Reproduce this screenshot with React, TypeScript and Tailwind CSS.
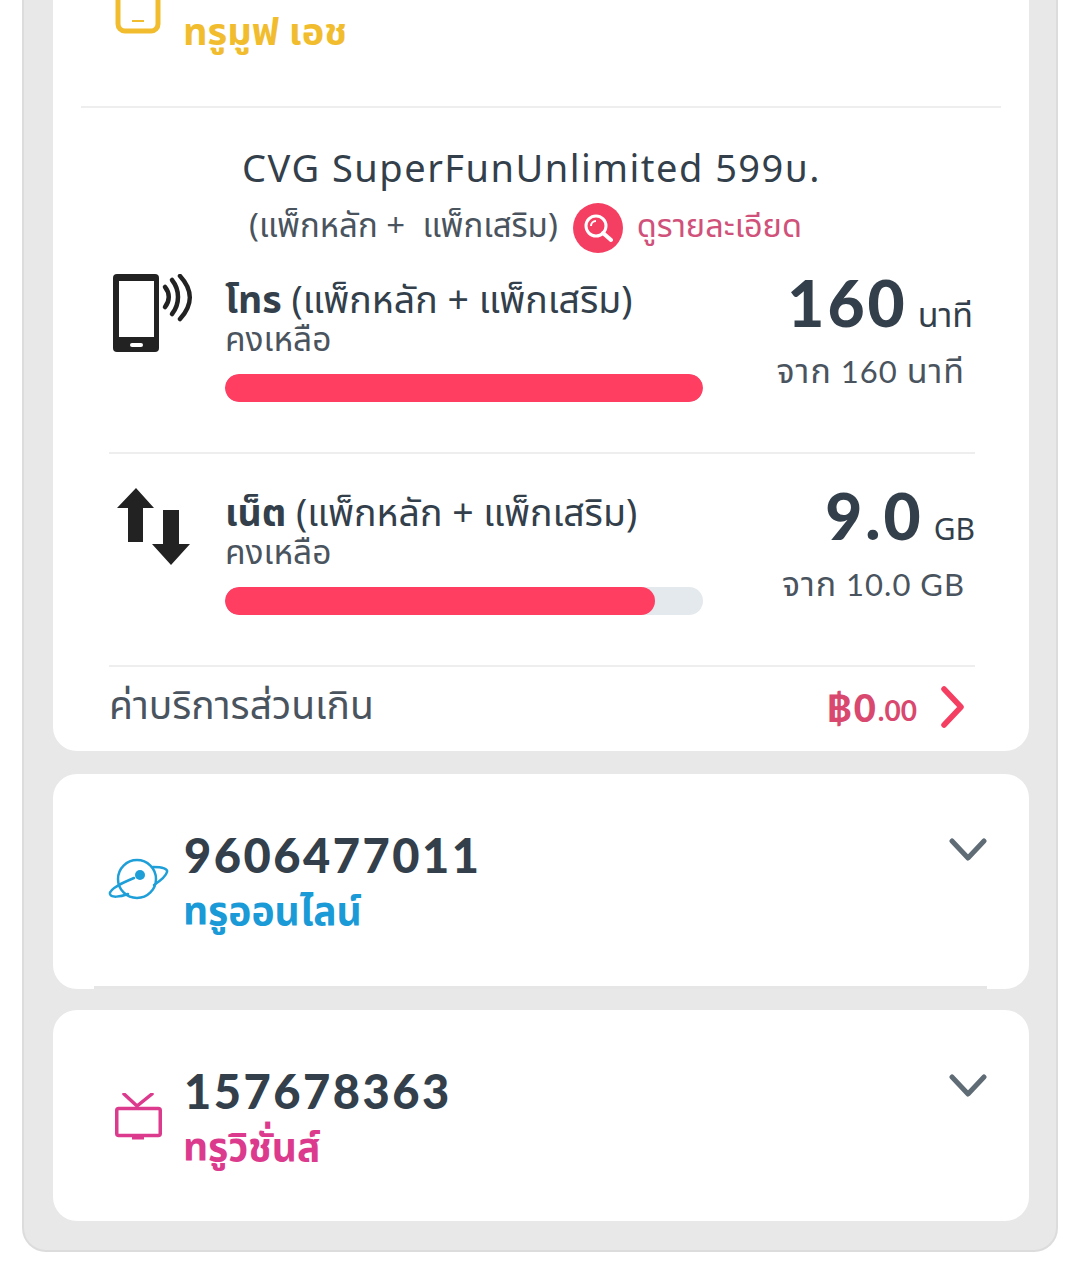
const font = "font-['Noto_Sans_Thai','Noto_Sans','Open_Sans',sans-serif]";
const digits = "font-['Lato','Noto_Sans_Thai','Noto_Sans',sans-serif]";

function PhoneWaves() {
  return (
    <svg className="ml-[1px]" width="80" height="80" viewBox="0 0 80 80" fill="none">
      <rect x="0" y="0" width="46" height="78" rx="4" fill="#222" />
      <rect x="6" y="7" width="35" height="56" fill="#fff" />
      <rect x="17" y="69" width="13" height="4" rx="2" fill="#fff" />
      <g stroke="#222" strokeWidth="4.5" strokeLinecap="round">
        <path d="M52 13c5 6 5 14 0 20" />
        <path d="M59 6c8 10 8 24 0 34" />
        <path d="M67 2c13 14 13 29 0 43" />
      </g>
    </svg>
  );
}

function Arrows() {
  return (
    <svg className="ml-[5px] mt-[1px]" width="74" height="78" viewBox="0 0 74 78" fill="#222">
      <path d="M19 0 37 20H26V54H11V20H0Z" />
      <path d="M46 22H62V56H73L54 77 35 56H46Z" />
    </svg>
  );
}

function Th({ children }: { children: React.ReactNode }) {
  return <span className="text-[34px]">{children}</span>;
}

function UsageRow({ icon, label, value, unit, total, pct }: { icon: React.ReactNode; label: string; value: string; unit: React.ReactNode; total: React.ReactNode; pct: number }) {
  return (
    <div className="flex h-[180px] border-b-2 border-[#eeeeee]">
      <div className="w-[116px] pl-[3px]">{icon}</div>
      <div className="w-[478px]">
        <div className="h-[48px] whitespace-nowrap text-[37.5px] leading-[56px] text-[#333f4b]">
          <span className="font-bold">{label}</span> (แพ็กหลัก + แพ็กเสริม)
        </div>
        <div className="h-[36px] text-[33.5px] leading-[38px] text-[#4a545e]">คงเหลือ</div>
        <div className="mt-[16px] h-[28px] overflow-hidden rounded-full bg-[#e4e9ee]">
          <div className="h-full rounded-full bg-[#ff3e62]" style={{ width: `${pct}%` }} />
        </div>
      </div>
      <div className="flex-1 whitespace-nowrap text-right">
        <div className="h-[60px] text-[#333f4b]">
          <span className={`${digits} text-[64px] font-black leading-[58px] tracking-[3px]`}>{value}</span>
          <span className="ml-[10px] leading-[58px]">{unit}</span>
        </div>
        <div className={`${digits} mt-[16px] pr-[10px] text-[31px] leading-[40px] tracking-[1px] text-[#4a545e]`}>{total}</div>
      </div>
    </div>
  );
}

function AccountCard({ icon, number, name, color, frame, divider }: { icon: React.ReactNode; number: string; name: string; color: string; frame: string; divider?: boolean }) {
  return (
    <div className={`relative flex rounded-[24px] bg-white ${frame}`}>
      <div className="w-[130px]">{icon}</div>
      <div className="pt-[50px]">
        <div className={`${digits} pl-[1px] text-[47px] font-black leading-[62px] tracking-[2.5px] text-[#333f4b]`}>{number}</div>
        <div className={`text-[39px] font-bold leading-[56px] ${color}`}>{name}</div>
      </div>
      <svg className="absolute right-[42px] top-[63px]" width="38" height="26" viewBox="0 0 38 26" fill="none">
        <path d="M3 4 19 21 35 4" stroke="#5f6b75" strokeWidth="5" strokeLinecap="round" strokeLinejoin="round" />
      </svg>
      {divider && <div className="absolute bottom-0 left-[41px] right-[42px] h-[3px] bg-[#e6e6e6]" />}
    </div>
  );
}

export default function App() {
  return (
    <div className={`h-[1264px] w-[1080px] overflow-hidden bg-white ${font}`}>
      <div className="mx-[22px] h-[1252px] rounded-b-[24px] border-x-2 border-b-2 border-[#dcdcdc] bg-[#e8e8e8] pl-[29px] pr-[27px]">
        <div className="h-[751px] rounded-b-[24px] bg-white px-[28px]">
          <div className="flex h-[108px] border-b-2 border-[#eeeeee]">
            <svg className="ml-[34px]" width="46" height="34" viewBox="0 0 46 34" fill="none">
              <path d="M3 0V24a7 7 0 0 0 7 7H36a7 7 0 0 0 7-7V0" stroke="#f1bd2e" strokeWidth="5" />
              <path d="M17 21H29" stroke="#f1bd2e" strokeWidth="2" />
            </svg>
            <div className="ml-[22px] text-[38px] font-bold leading-[68px] text-[#f1bd2e]">ทรูมูฟ เอช</div>
          </div>
          <div className="pl-[28px] pr-[26px]">
            <div className="mt-[37px] pr-[21px] text-center text-[38px] leading-[52px] tracking-[1.5px] text-[#333f4b]">CVG SuperFunUnlimited 599บ.</div>
            <div className="flex h-[58px] items-center pl-[140px] pt-[4px]">
              <span className="whitespace-pre text-[33px] text-[#4a545e]">(แพ็กหลัก +  แพ็กเสริม)</span>
              <span className="ml-[15px] flex h-[50px] w-[50px] items-center justify-center rounded-full bg-[#f43f62]">
                <svg width="30" height="30" viewBox="0 0 30 30" fill="none" stroke="#fff">
                  <circle cx="13" cy="13" r="10" strokeWidth="3" />
                  <path d="M8 13a5 5 0 0 1 5-5" strokeWidth="2" />
                  <path d="M20 20 28 27" strokeWidth="4" strokeLinecap="round" />
                </svg>
              </span>
              <span className="ml-[14px] text-[32.5px] text-[#d0517a]">ดูรายละเอียด</span>
            </div>
            <div className="pt-[19px]">
              <UsageRow
                icon={<PhoneWaves />}
                label="โทร"
                value="160"
                unit={<span className="mr-[2px] text-[34px]">นาที</span>}
                total={<><Th>จาก</Th> 160 <Th>นาที</Th></>}
                pct={100}
              />
              <div className="pt-[33px]">
                <UsageRow
                  icon={<Arrows />}
                  label="เน็ต"
                  value="9.0"
                  unit={<span className="text-[30px]">GB</span>}
                  total={<><Th>จาก</Th> 10.0 GB</>}
                  pct={90}
                />
              </div>
            </div>
            <div className="flex h-[84px] items-center justify-between pb-[4px]">
              <span className="mt-[3px] text-[39px] text-[#4a545e]">ค่าบริการส่วนเกิน</span>
              <span className="flex items-center text-[#d9486e]">
                <span className={`${digits} text-[38px] font-black tracking-[2px]`}>฿0</span>
                <span className={`${digits} mt-[6px] text-[28px] font-bold`}>.00</span>
                <svg className="ml-[24px] mr-[8px]" width="26" height="42" viewBox="0 0 26 42" fill="none">
                  <path d="M3 3 20 21 3 39" stroke="#f43f62" strokeWidth="5.5" strokeLinecap="round" strokeLinejoin="round" />
                </svg>
              </span>
            </div>
          </div>
        </div>

        <AccountCard
          frame="mt-[23px] h-[215px]"
          divider
          number="9606477011"
          name="ทรูออนไลน์"
          color="text-[#1a9ad6]"
          icon={
            <svg className="ml-[55px] mt-[84px]" width="62" height="44" viewBox="0 0 62 44" fill="none" stroke="#1f9fd8" strokeWidth="2.5" strokeLinecap="round">
              <circle cx="29" cy="21" r="19" />
              <path d="M45 9C55 9 60 11 59 14 58 18 52 23 46 27" />
              <path d="M26 20C14 25 1 31 2 36 3 40 12 39 20 36" />
              <circle cx="32" cy="17" r="5" fill="#1f9fd8" stroke="none" />
            </svg>
          }
        />
        <AccountCard
          frame="mt-[21px] h-[211px]"
          number="157678363"
          name="ทรูวิชั่นส์"
          color="text-[#dc3a8d]"
          icon={
            <svg className="ml-[62px] mt-[83px]" width="47" height="47" viewBox="0 0 47 47" fill="none" stroke="#dc3a8d">
              <rect x="1.75" y="15.5" width="43.5" height="27" rx="2" strokeWidth="3.5" />
              <path d="M9 1 22 13 37 1" strokeWidth="3.5" strokeLinecap="round" />
              <path d="M17 45H29" strokeWidth="3" />
            </svg>
          }
        />
      </div>
    </div>
  );
}
